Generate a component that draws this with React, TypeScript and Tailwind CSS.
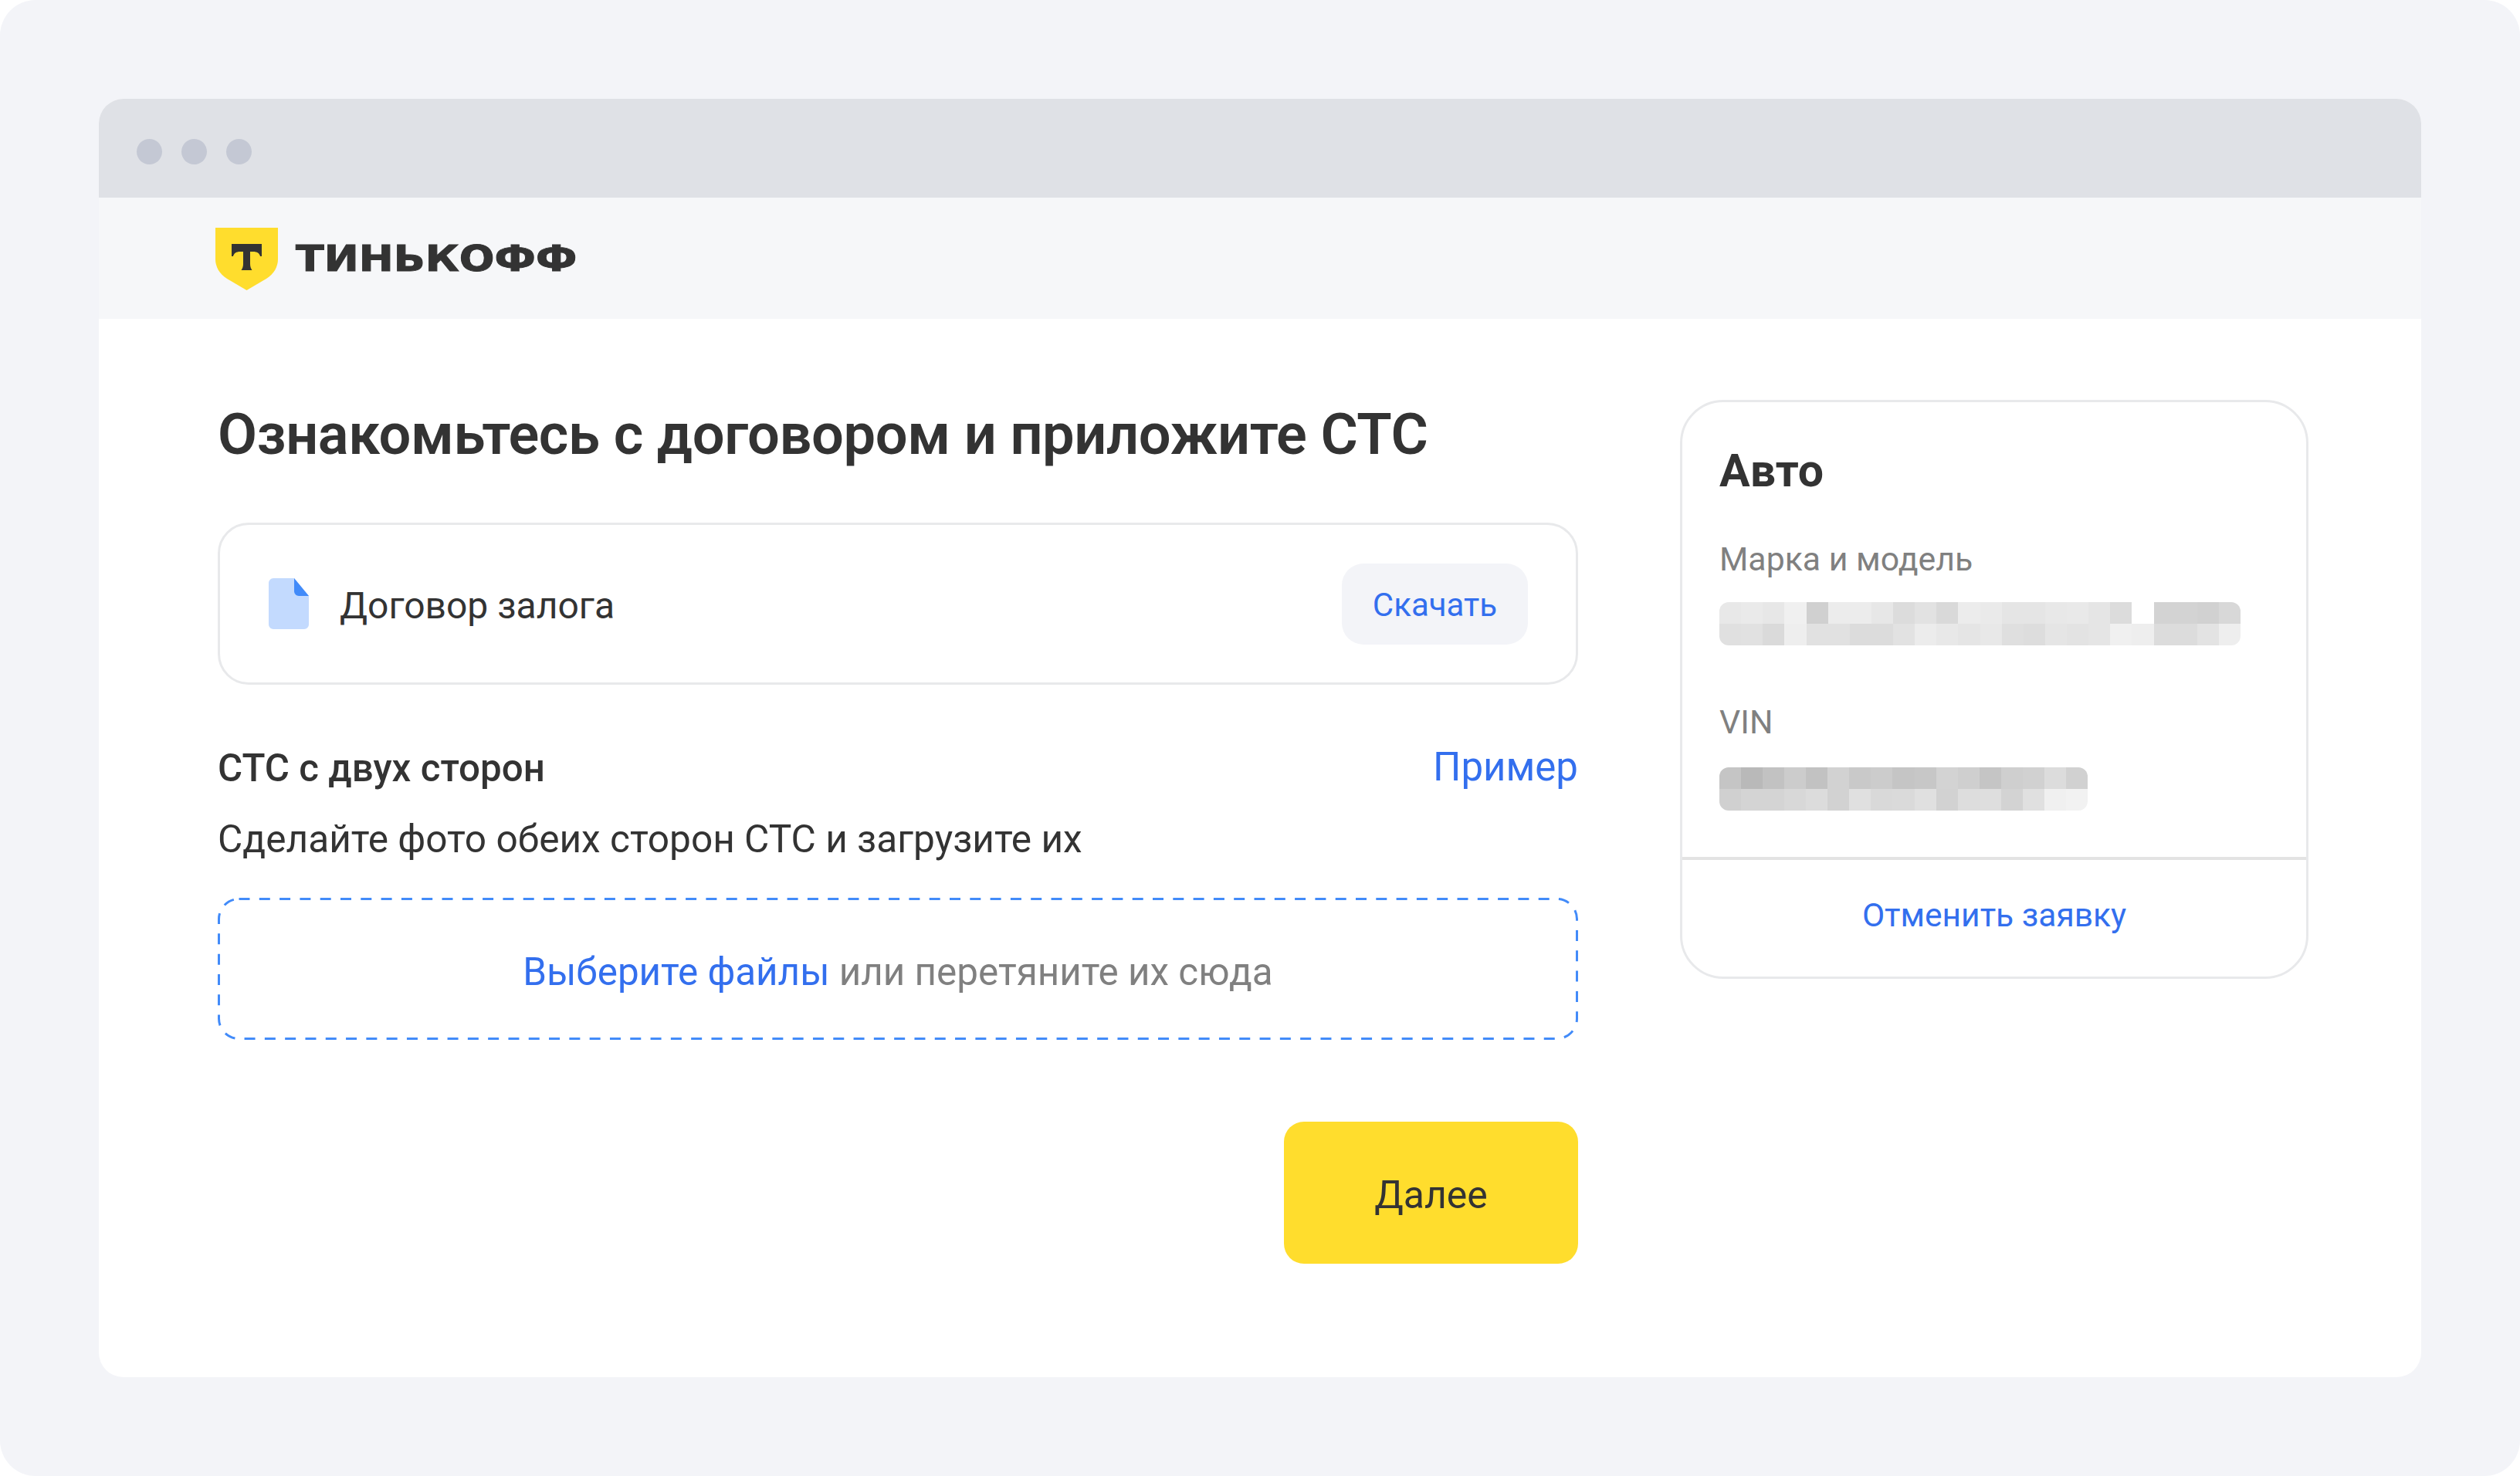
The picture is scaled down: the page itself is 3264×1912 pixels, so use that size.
const R1 = ["e8","ea","e7","f0","d0","ec","ec","e7","dc","e2","d9","ec","ea","e5","e5","e8","e9","e5","dc","ff","d3","d3","d1","d8"];
const R2 = ["e0","e1","da","ee","e1","e1","dc","dc","e2","ec","e8","e5","e8","df","dd","e5","e3","e5","f0","ee","dc","dc","e3","ee"];
const V1 = ["c5","b9","c2","cc","c2","d2","c9","cc","c5","c7","d3","cf","c5","cf","d1","dc","d1"];
const V2 = ["d0","d4","d4","d8","dc","d2","e0","d9","da","e0","d2","dd","de","d3","e0","f0","f2"];

function Mosaic({ rows, className }: { rows: string[]; className: string }) {
  return (
    <div className={className}>
      {rows.map((c, i) => (
        <div key={i} style={{ backgroundColor: `#${c}${c}${c}` }} />
      ))}
    </div>
  );
}

export default function App() {
  return (
    <div className="w-[3264px] h-[1912px] bg-white text-[#333333] [font-family:Roboto,sans-serif]">
      <div className="w-full h-full bg-[#f3f4f8] rounded-[46px] pt-[128px] px-[128px] pb-[128px]">
        <div className="w-full h-full bg-white rounded-[32px] overflow-hidden flex flex-col">
          <div className="h-[128px] bg-[#dfe1e6] flex items-center pl-[49px] gap-[25px] pt-[9px]">
            <div className="w-[33px] h-[33px] rounded-full bg-[#c4c8d4]" />
            <div className="w-[33px] h-[33px] rounded-full bg-[#c4c8d4]" />
            <div className="w-[33px] h-[33px] rounded-full bg-[#c4c8d4]" />
          </div>
          <div className="h-[157px] bg-[#f6f7f9] flex items-start pl-[151px] pt-[39px] gap-[23px]">
            <svg width="81" height="81" viewBox="0 0 81 81" className="shrink-0">
              <path d="M0 0H81V41C81 50 76 60 66 66L40.500 81L15 66C5 60 0 50 0 41Z" fill="#ffdd2d" />
              <path d="M21 21H60V37H58C57 33 54 31 49 31H45V47C45 50 46 53 47.500 55H33.500C35 53 36 50 36 47V31H32C27 31 24 33 23 37H21Z" fill="#333333" />
            </svg>
            <div className="mt-[-1px] h-[81px] flex items-center [font-family:'DejaVu_Sans',sans-serif] font-bold text-[47px] leading-none text-[#333333] origin-left scale-x-[1.145] [-webkit-text-stroke:1px_#333333]">
              ТИНЬКОФФ
            </div>
          </div>
          <div className="flex-1 flex pl-[154px] pt-[105px]">
            <div className="w-[1762px] shrink-0 flex flex-col">
              <div className="mt-[5px] mb-[1px] text-[74px] leading-[80px] font-semibold tracking-[-0.4px]">Ознакомьтесь с договором и приложите СТС</div>
              <div className="mt-[73px] h-[210px] rounded-[40px] border-[3px] border-[#e8e9eb] flex items-center pl-[63px] pr-[62px]">
                <svg width="52" height="66" viewBox="0 0 52 66" className="shrink-0">
                  <path d="M6 0H33L52 23V60C52 63 49 66 46 66H6C3 66 0 63 0 60V6C0 3 3 0 6 0Z" fill="#c3dafe" />
                  <path d="M33 0L52 23H39C36 23 33 20 33 17Z" fill="#428bf9" />
                </svg>
                <div className="ml-[40px] mt-[6px] text-[48px] leading-[60px] flex-1">Договор залога</div>
                <div className="w-[241px] h-[105px] rounded-[28px] bg-[#f3f4f8] flex items-center justify-center pt-[2px] text-[42px] text-[#336fee]">Скачать</div>
              </div>
              <div className="mt-[78px] flex justify-between items-center h-[60px]">
                <div className="pt-[2px] text-[49.300px] font-medium">СТС с двух сторон</div>
                <div className="pb-[2px] text-[51px] text-[#336fee]">Пример</div>
              </div>
              <div className="mt-[32px] text-[49.600px] leading-[60px]">Сделайте фото обеих сторон СТС и загрузите их</div>
              <div className="relative mt-[46px] h-[184px] flex items-center justify-center pt-[8px] text-[49.400px] text-[#808080]">
                <svg width="1762" height="184" className="absolute inset-0">
                  <rect x="1.500" y="1.500" width="1759" height="181" rx="26" fill="none" stroke="#428bf9" strokeWidth="3" strokeDasharray="14 12.300" />
                </svg>
                <span className="text-[#336fee]">Выберите файлы</span>
                <span className="whitespace-pre"> или перетяните их сюда</span>
              </div>
              <div className="mt-[106px] flex justify-end">
                <div className="w-[381px] h-[184px] rounded-[26px] bg-[#ffdd2d] flex items-center justify-center pt-[6px] text-[50px] text-[#333333]">Далее</div>
              </div>
            </div>
            <div className="ml-[132px] w-[814px] h-[750px] rounded-[56px] border-[3px] border-[#e8e9eb] flex flex-col shrink-0">
              <div className="flex-1 pl-[48px] pt-[53px]">
                <div className="text-[59px] leading-[72px] font-bold">Авто</div>
                <div className="mt-[52px] text-[42.800px] leading-[52px] text-[#808080]">Марка и модель</div>
                <div className="mt-[30px] w-[675px] h-[56px] rounded-[12px] overflow-hidden">
                  <Mosaic rows={R1} className="grid grid-cols-[repeat(24,1fr)] h-[28px]" />
                  <Mosaic rows={R2} className="grid grid-cols-[repeat(24,1fr)] h-[28px]" />
                </div>
                <div className="mt-[73px] text-[42.800px] leading-[52px] text-[#808080]">VIN</div>
                <div className="mt-[33px] w-[477px] h-[56px] rounded-[12px] overflow-hidden">
                  <Mosaic rows={V1} className="grid grid-cols-[repeat(17,1fr)] h-[28px]" />
                  <Mosaic rows={V2} className="grid grid-cols-[repeat(17,1fr)] h-[28px]" />
                </div>
              </div>
              <div className="h-[155px] border-t-[4px] border-[#e3e3e3] flex items-center justify-center pb-[8px] text-[42.500px] text-[#336fee]">Отменить заявку</div>
            </div>
          </div>
        </div>
      </div>
    </div>
  );
}
